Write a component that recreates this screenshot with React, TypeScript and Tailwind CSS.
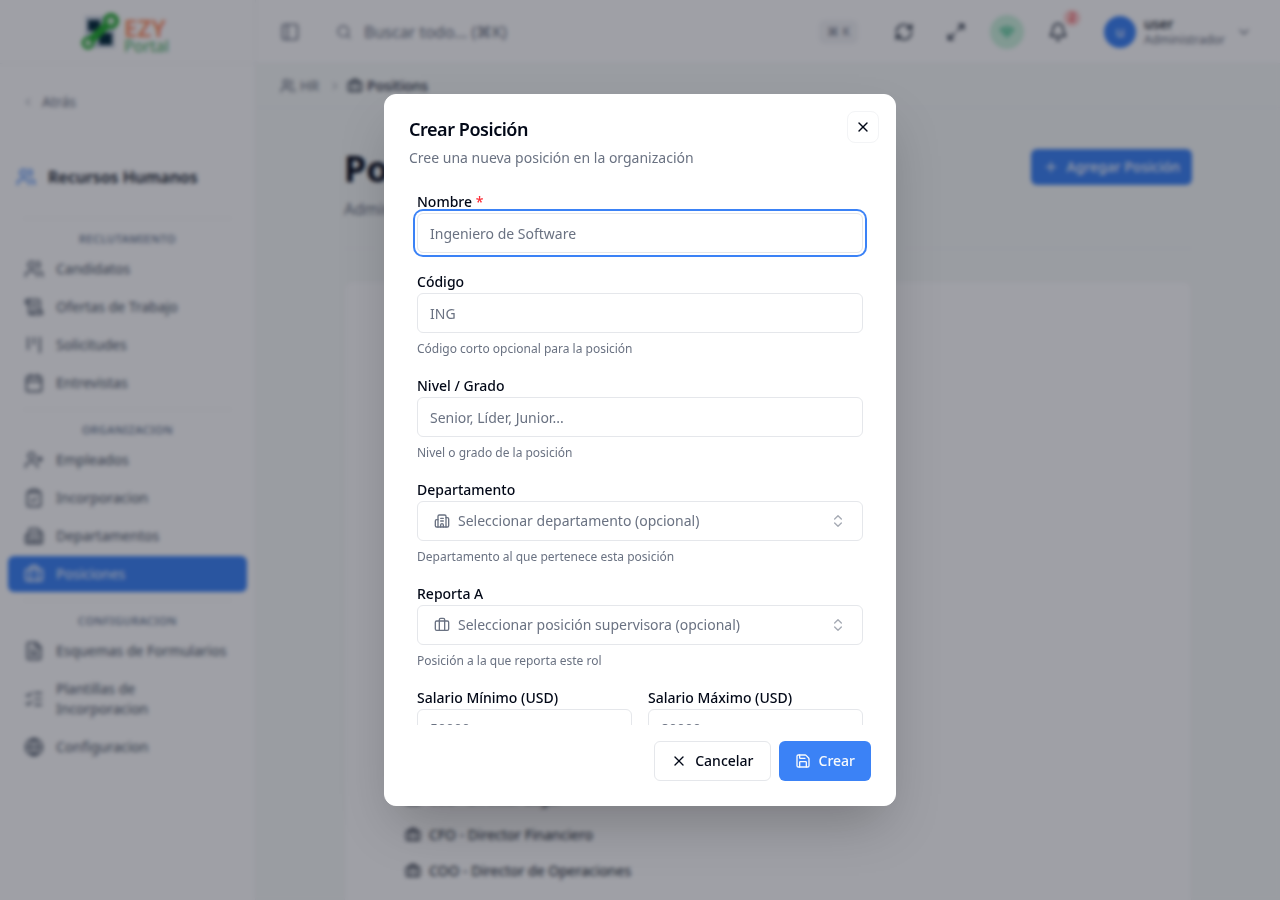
import type { ReactNode } from 'react';
import {
  Bell,
  Briefcase,
  Building2,
  Calendar,
  ChevronDown,
  ChevronLeft,
  ChevronRight,
  ChevronsUpDown,
  ClipboardCheck,
  FileText,
  Globe,
  Kanban,
  ListChecks,
  Maximize2,
  PanelLeft,
  Plus,
  RefreshCw,
  Save,
  ScrollText,
  Search,
  UserPlus,
  Users,
  Wifi,
  X,
  type LucideIcon
} from 'lucide-react';

type NavItem = { label: string; icon: LucideIcon; active?: boolean };

const sections: { title: string; items: NavItem[] }[] = [
  {
    title: 'Reclutamiento',
    items: [
      { label: 'Candidatos', icon: Users },
      { label: 'Ofertas de Trabajo', icon: ScrollText },
      { label: 'Solicitudes', icon: Kanban },
      { label: 'Entrevistas', icon: Calendar }
    ]
  },
  {
    title: 'Organizacion',
    items: [
      { label: 'Empleados', icon: UserPlus },
      { label: 'Incorporacion', icon: ClipboardCheck },
      { label: 'Departamentos', icon: Building2 },
      { label: 'Posiciones', icon: Briefcase, active: true }
    ]
  },
  {
    title: 'Configuracion',
    items: [
      { label: 'Esquemas de Formularios', icon: FileText },
      { label: 'Plantillas de Incorporacion', icon: ListChecks },
      { label: 'Configuracion', icon: Globe }
    ]
  }
];

const positions = ['CLO - Director Legal', 'CFO - Director Financiero', 'COO - Director de Operaciones'];

const inputClass =
  'block h-10 w-full rounded-md border border-gray-200 bg-white px-3 text-sm text-[#020817] placeholder:text-gray-500 outline-none';

function Logo() {
  return (
    <div className="flex items-center gap-1">
      <svg viewBox="0 0 40 40" className="size-10" fill="none">
        <rect x="5" y="4" width="30" height="32" fill="#cbd5e1" />
        <rect x="8" y="8" width="12" height="11" fill="#04293a" />
        <rect x="19" y="21" width="13" height="12" fill="#04293a" />
        <path d="M8 31 L30 10" stroke="#22a82f" strokeWidth="8" />
        <circle cx="31" cy="9" r="6" stroke="#22a82f" strokeWidth="4" fill="#c9e8cc" />
        <circle cx="8" cy="31" r="5" stroke="#22a82f" strokeWidth="3" fill="#c9e8cc" />
      </svg>
      <div className="mt-2 flex flex-col">
        <span className="text-2xl leading-5 font-semibold text-[#ff8a5c]">EZY</span>
        <span className="text-base leading-4 text-[#3fa95a]">Portal</span>
      </div>
    </div>
  );
}

function Sidebar() {
  return (
    <aside className="flex w-64 shrink-0 flex-col border-r border-gray-100 bg-white">
      <div className="flex h-16 shrink-0 items-center justify-center border-b border-gray-100 pr-1.5">
        <Logo />
      </div>
      <div className="px-6 pt-7">
        <a href="#" className="-ml-0.5 flex items-center gap-2 text-sm text-gray-500">
          <ChevronLeft className="size-3" />
          Atrás
        </a>
      </div>
      <div className="flex items-center gap-3 px-4 pt-[53px] pb-[29px]">
        <Users className="size-5 text-[#3b82f6]" />
        <h2 className="font-semibold text-gray-900">Recursos Humanos</h2>
      </div>
      <nav className="flex flex-col px-2">
        {sections.map((section) => (
          <div key={section.title} className="pb-2">
            <hr className="mx-4 border-gray-100" />
            <p className="mt-3 mb-1 text-center text-[11px] leading-4 font-medium tracking-wider text-slate-500 uppercase">
              {section.title}
            </p>
            <ul className="flex flex-col gap-0.5">
              {section.items.map(({ label, icon: Icon, active }) => (
                <li key={label}>
                  <a
                    href="#"
                    className={`flex items-center gap-3 rounded-md px-4 py-2 text-sm ${
                      active ? 'bg-[#3b82f6] text-slate-50' : 'text-gray-600'
                    }`}
                  >
                    <Icon className="size-5 shrink-0" />
                    {label}
                  </a>
                </li>
              ))}
            </ul>
          </div>
        ))}
      </nav>
    </aside>
  );
}

function Header() {
  return (
    <header className="flex h-16 shrink-0 items-center border-b border-gray-100 bg-white pr-7 pl-6">
      <button type="button" aria-label="Menú" className="text-gray-500">
        <PanelLeft className="size-5" />
      </button>
      <div className="ml-9 flex flex-1 items-center gap-3">
        <Search className="size-4 text-gray-500" />
        <input
          aria-label="Buscar"
          placeholder="Buscar todo... (⌘K)"
          className="min-w-0 flex-1 bg-transparent placeholder:text-gray-500 outline-none"
        />
        <kbd className="rounded-md bg-gray-100 px-2 py-1 font-[inherit] text-xs text-gray-500">⌘ K</kbd>
      </div>
      <div className="ml-9 flex items-center gap-8 text-gray-800">
        <button type="button" aria-label="Actualizar">
          <RefreshCw className="size-5" />
        </button>
        <button type="button" aria-label="Pantalla completa">
          <Maximize2 className="size-5" />
        </button>
      </div>
      <div className="ml-6 flex size-[34px] items-center justify-center rounded-full bg-[#cdf3de] text-[#4cc493]">
        <Wifi className="size-4" strokeWidth={3} />
      </div>
      <button type="button" aria-label="Notificaciones" className="relative ml-6 text-gray-800">
        <Bell className="size-5" />
        <span className="absolute -top-3 -right-3 flex size-4 items-center justify-center rounded-full bg-red-200 text-[10px] text-red-600">
          2
        </span>
      </button>
      <div className="ml-9 flex items-center gap-2">
        <div className="flex size-8 items-center justify-center rounded-full bg-[#3b82f6] text-sm text-white">u</div>
        <div className="w-20">
          <p className="text-sm leading-4 font-medium text-gray-900">user</p>
          <p className="text-xs leading-4 text-gray-500">Administrador</p>
        </div>
        <ChevronDown className="ml-1 size-4 text-gray-500" />
      </div>
    </header>
  );
}

function PositionsPage() {
  return (
    <div className="flex min-w-0 flex-1 flex-col bg-[#f7faf8]">
      <Header />
      <div className="flex h-11 shrink-0 items-center gap-1 border-b border-gray-100 px-6 text-sm text-gray-500">
        <Users className="size-4" />
        <span>HR</span>
        <ChevronRight className="mr-0.5 ml-1.5 size-3" />
        <Briefcase className="size-4 text-gray-800" />
        <span className="font-medium text-gray-800">Positions</span>
      </div>
      <main className="flex flex-1 flex-col px-22">
        <div className="flex items-start justify-between border-b border-gray-100 pt-[41px] pb-[27px]">
          <div>
            <h1 className="text-4xl font-bold text-[#020817]">Posiciones</h1>
            <p className="mt-2 text-gray-500">Administrar posiciones</p>
          </div>
          <button
            type="button"
            className="flex h-9 items-center gap-2 rounded-md bg-[#3b82f6] px-3 text-sm font-medium text-slate-50"
          >
            <Plus className="size-4" />
            Agregar Posición
          </button>
        </div>
        <section className="mt-8 flex shrink-0 flex-col rounded-lg border border-gray-100 bg-white px-15 pt-[499px] pb-10">
          <ul>
            {positions.map((name) => (
              <li key={name} className="flex h-9 items-center gap-2 text-sm text-gray-900">
                <Briefcase className="size-4" />
                {name}
              </li>
            ))}
          </ul>
        </section>
      </main>
    </div>
  );
}

type FieldProps = {
  id: string;
  label: string;
  hint?: string;
  required?: boolean;
  children: ReactNode;
};

function Field({ id, label, hint, required, children }: FieldProps) {
  return (
    <div>
      <label htmlFor={id} className="mb-0.5 block text-sm leading-[18px] font-medium text-[#020817]">
        {label}
        {required && <span className="text-red-500"> *</span>}
      </label>
      {children}
      {hint && <p className="mt-2 text-xs text-gray-500">{hint}</p>}
    </div>
  );
}

type SelectFieldProps = { id: string; placeholder: string; icon: LucideIcon };

function SelectField({ id, placeholder, icon: Icon }: SelectFieldProps) {
  return (
    <div className="relative">
      <Icon className="pointer-events-none absolute top-3 left-[17px] size-4 text-gray-500" />
      <select
        id={id}
        className="block h-10 w-full appearance-none rounded-md border border-gray-200 bg-white px-10 text-sm text-gray-500 outline-none"
      >
        <option>{placeholder}</option>
      </select>
      <ChevronsUpDown className="pointer-events-none absolute top-3 right-[17px] size-4 text-gray-500 opacity-60" />
    </div>
  );
}

function CreatePositionDialog() {
  return (
    <div className="fixed inset-0 flex items-center justify-center bg-[#101220]/40 backdrop-blur-[2px]">
      <div
        role="dialog"
        aria-labelledby="dialog-title"
        className="relative flex w-full max-w-lg flex-col gap-4 rounded-xl border border-white bg-white p-6 shadow-2xl"
      >
        <div className="mb-px flex flex-col gap-2">
          <h2 id="dialog-title" className="text-lg leading-[21px] font-semibold tracking-tight text-[#020817]">
            Crear Posición
          </h2>
          <p className="text-sm text-gray-500">Cree una nueva posición en la organización</p>
        </div>
        <form className="flex max-h-[60vh] flex-col gap-5 overflow-y-auto p-2 [scrollbar-width:none]">
          <Field id="name" label="Nombre" required>
            <input
              id="name"
              placeholder="Ingeniero de Software"
              className={`${inputClass} ring-2 ring-[#3b82f6] ring-offset-2`}
            />
          </Field>
          <Field id="code" label="Código" hint="Código corto opcional para la posición">
            <input id="code" placeholder="ING" className={inputClass} />
          </Field>
          <Field id="level" label="Nivel / Grado" hint="Nivel o grado de la posición">
            <input id="level" placeholder="Senior, Líder, Junior..." className={inputClass} />
          </Field>
          <Field id="department" label="Departamento" hint="Departamento al que pertenece esta posición">
            <SelectField id="department" placeholder="Seleccionar departamento (opcional)" icon={Building2} />
          </Field>
          <Field id="reports-to" label="Reporta A" hint="Posición a la que reporta este rol">
            <SelectField id="reports-to" placeholder="Seleccionar posición supervisora (opcional)" icon={Briefcase} />
          </Field>
          <div className="grid grid-cols-2 gap-4">
            <Field id="min-salary" label="Salario Mínimo (USD)">
              <input id="min-salary" type="number" placeholder="50000" className={`${inputClass} pb-0.5`} />
            </Field>
            <Field id="max-salary" label="Salario Máximo (USD)">
              <input id="max-salary" type="number" placeholder="80000" className={`${inputClass} pb-0.5`} />
            </Field>
          </div>
        </form>
        <div className="flex justify-end gap-2">
          <button
            type="button"
            className="flex h-10 items-center gap-2 rounded-md border border-gray-200 bg-white px-4 text-sm font-medium text-[#020817]"
          >
            <X className="size-4" />
            Cancelar
          </button>
          <button
            type="button"
            className="flex h-10 items-center gap-2 rounded-md bg-[#3b82f6] px-4 text-sm font-medium text-slate-50"
          >
            <Save className="size-4" />
            Crear
          </button>
        </div>
        <button
          type="button"
          aria-label="Cerrar"
          className="absolute top-4 right-4 flex size-8 items-center justify-center rounded-lg border border-gray-100 text-[#020817]"
        >
          <X className="size-4" />
        </button>
      </div>
    </div>
  );
}

export default function App() {
  return (
    <div className="flex h-screen overflow-hidden font-['Noto_Sans',sans-serif]">
      <Sidebar />
      <PositionsPage />
      <CreatePositionDialog />
    </div>
  );
}
